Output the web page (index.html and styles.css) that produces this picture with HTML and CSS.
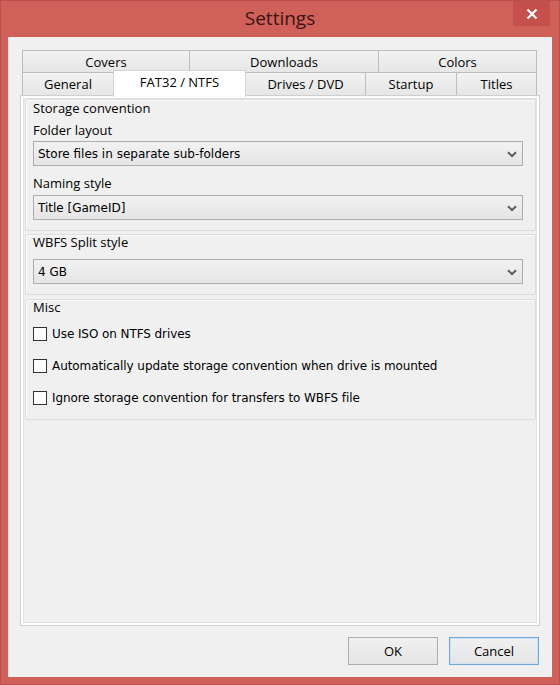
FILE: index.html
```html
<!DOCTYPE html>
<html>
<head>
<meta charset="utf-8">
<title>Settings</title>
<link rel="stylesheet" href="styles.css">
</head>
<body>
<div class="window">
  <div class="titlebar">
    <span class="title">Settings</span>
    <div class="close">
      <svg width="12" height="12" viewBox="0 0 12 12"><path d="M1.5 1.5 L10.5 10.5 M10.5 1.5 L1.5 10.5" stroke="#fff" stroke-width="2.2" fill="none"/></svg>
    </div>
  </div>
  <div class="client">
    <div class="tabctl">
      <div class="tabrow">
        <div class="tab w167">Covers</div>
        <div class="tab w189">Downloads</div>
        <div class="tab w159">Colors</div>
      </div>
      <div class="tabrow front">
        <div class="tab w91">General</div>
        <div class="tab w132 active">FAT32 / NTFS</div>
        <div class="tab w120">Drives / DVD</div>
        <div class="tab w91">Startup</div>
        <div class="tab w81">Titles</div>
      </div>
      <div class="panel">
        <div class="panel-inner">
          <div class="group g-storage">
            <div class="glabel">Storage convention</div>
            <div class="flabel first">Folder layout</div>
            <div class="combo"><span>Store files in separate sub-folders</span><svg class="chev" width="10" height="7" viewBox="0 0 10 7"><path d="M1 1.2 L5 5.2 L9 1.2" stroke="#5a5a5a" stroke-width="2" fill="none"/></svg></div>
            <div class="flabel second">Naming style</div>
            <div class="combo c2"><span>Title [GameID]</span><svg class="chev" width="10" height="7" viewBox="0 0 10 7"><path d="M1 1.2 L5 5.2 L9 1.2" stroke="#5a5a5a" stroke-width="2" fill="none"/></svg></div>
          </div>
          <div class="group g-wbfs">
            <div class="glabel">WBFS Split style</div>
            <div class="combo c3"><span>4 GB</span><svg class="chev" width="10" height="7" viewBox="0 0 10 7"><path d="M1 1.2 L5 5.2 L9 1.2" stroke="#5a5a5a" stroke-width="2" fill="none"/></svg></div>
          </div>
          <div class="group g-misc">
            <div class="glabel">Misc</div>
            <label class="check first"><span class="box"></span><span class="ctext">Use ISO on NTFS drives</span></label>
            <label class="check"><span class="box"></span><span class="ctext">Automatically update storage convention when drive is mounted</span></label>
            <label class="check"><span class="box"></span><span class="ctext">Ignore storage convention for transfers to WBFS file</span></label>
          </div>
        </div>
      </div>
    </div>
    <div class="buttons">
      <div class="btn">OK</div>
      <div class="btn default">Cancel</div>
    </div>
  </div>
</div>
</body>
</html>
```
FILE: styles.css
```css
* { box-sizing: border-box; }
html, body { margin: 0; padding: 0; background: #cf605a; }
.window {
  width: 560px;
  height: 685px;
  background: #cf605a;
  border: 1px solid #b9504b;
  display: flex;
  flex-direction: column;
  font-family: "Open Sans", "Noto Sans", sans-serif;
  color: #000;
}
.titlebar {
  height: 36px;
  position: relative;
  display: flex;
  align-items: center;
  justify-content: center;
}
.title {
  font-family: "Open Sans", "Noto Sans", sans-serif;
  font-size: 19px;
  color: #3b1412;
  margin-top: -3px;
}
.close {
  position: absolute;
  top: 0;
  right: 9px;
  width: 37px;
  height: 25px;
  background: #c54f4b;
  display: flex;
  align-items: center;
  justify-content: center;
}
.client {
  margin: 0 7px;
  height: 640px;
  background: #f0f0f0;
  border-left: 1px solid #f3dede;
  padding: 13px 13px 0 11px;
  display: flex;
  flex-direction: column;
}
.tabctl { display: flex; flex-direction: column; }
.tabrow {
  display: flex;
  padding-left: 2px;
  height: 22px;
}
.tabrow.front { height: 23px; position: relative; z-index: 2; }
.tab {
  height: 100%;
  border: 1px solid #bdbdbd;
  border-bottom: none;
  background: linear-gradient(#f2f2f2, #e6e6e6);
  margin-right: -1px;
  font-size: 13px;
  display: flex;
  align-items: center;
  justify-content: center;
  line-height: 1;
  padding-top: 1px;
}
.tab.active {
  background: #fff;
  border-color: #d4d4d4;
  height: 27px;
  margin-top: -2px;
  padding-bottom: 4px;
  position: relative;
  z-index: 3;
}
.w167 { width: 168px; }
.w189 { width: 190px; }
.w159 { width: 159px; }
.w91 { width: 92px; }
.w132 { width: 133px; }
.w120 { width: 121px; }
.w81 { width: 81px; }
.panel {
  width: 520px;
  height: 531px;
  background: #fff;
  border: 1px solid #cfcfcf;
  padding: 2px;
  position: relative;
  z-index: 1;
}
.panel-inner {
  height: 100%;
  background: #f0f0f0;
  border: 1px solid #e2e2e2;
  padding: 0 0 0 1px;
}
.group {
  border: 1px solid #dcdcdc;
  border-radius: 2px;
  box-shadow: inset 1px 1px 0 #fafafa;
  padding: 0 12px 0 7px;
}
.g-storage { height: 132px; }
.g-wbfs { margin-top: 3px; height: 61px; }
.g-misc { margin-top: 4px; height: 121px; }
.glabel, .flabel {
  font-size: 13px;
  line-height: 16px;
  height: 16px;
}
.g-storage .glabel { margin-top: 0; }
.g-wbfs .glabel, .g-misc .glabel { margin-top: -1px; }
.flabel.first { margin-top: 6px; }
.flabel.second { margin-top: 9px; }
.combo {
  height: 25px;
  margin-top: 3px;
  border: 1px solid #adadad;
  background: linear-gradient(#f2f2f2, #e5e5e5);
  display: flex;
  align-items: center;
  justify-content: space-between;
  padding: 0 5px 0 4px;
  font-family: "DejaVu Sans", sans-serif;
  font-size: 12px;
}
.combo.c2 { margin-top: 4px; }
.combo.c3 { margin-top: 9px; }
.chev { margin-top: 1px; }
.check {
  display: flex;
  align-items: center;
  height: 16px;
  margin-top: 16px;
  font-family: "DejaVu Sans", sans-serif;
  font-size: 12px;
  letter-spacing: -0.08px;
}
.check.first { margin-top: 11px; }
.box {
  width: 14px;
  height: 14px;
  border: 1px solid #333;
  background: #fdfdfd;
  margin-right: 5px;
  flex: none;
}
.buttons {
  display: flex;
  justify-content: flex-end;
  gap: 11px;
  margin-top: 11px;
}
.btn {
  width: 90px;
  height: 28px;
  border: 1px solid #adadad;
  background: linear-gradient(#f0f0f0, #e5e5e5);
  display: flex;
  align-items: center;
  justify-content: center;
  font-size: 13px;
}
.btn.default { border-color: #6ea7dc; box-shadow: inset 0 0 0 1px #cfe3f6; }
```
